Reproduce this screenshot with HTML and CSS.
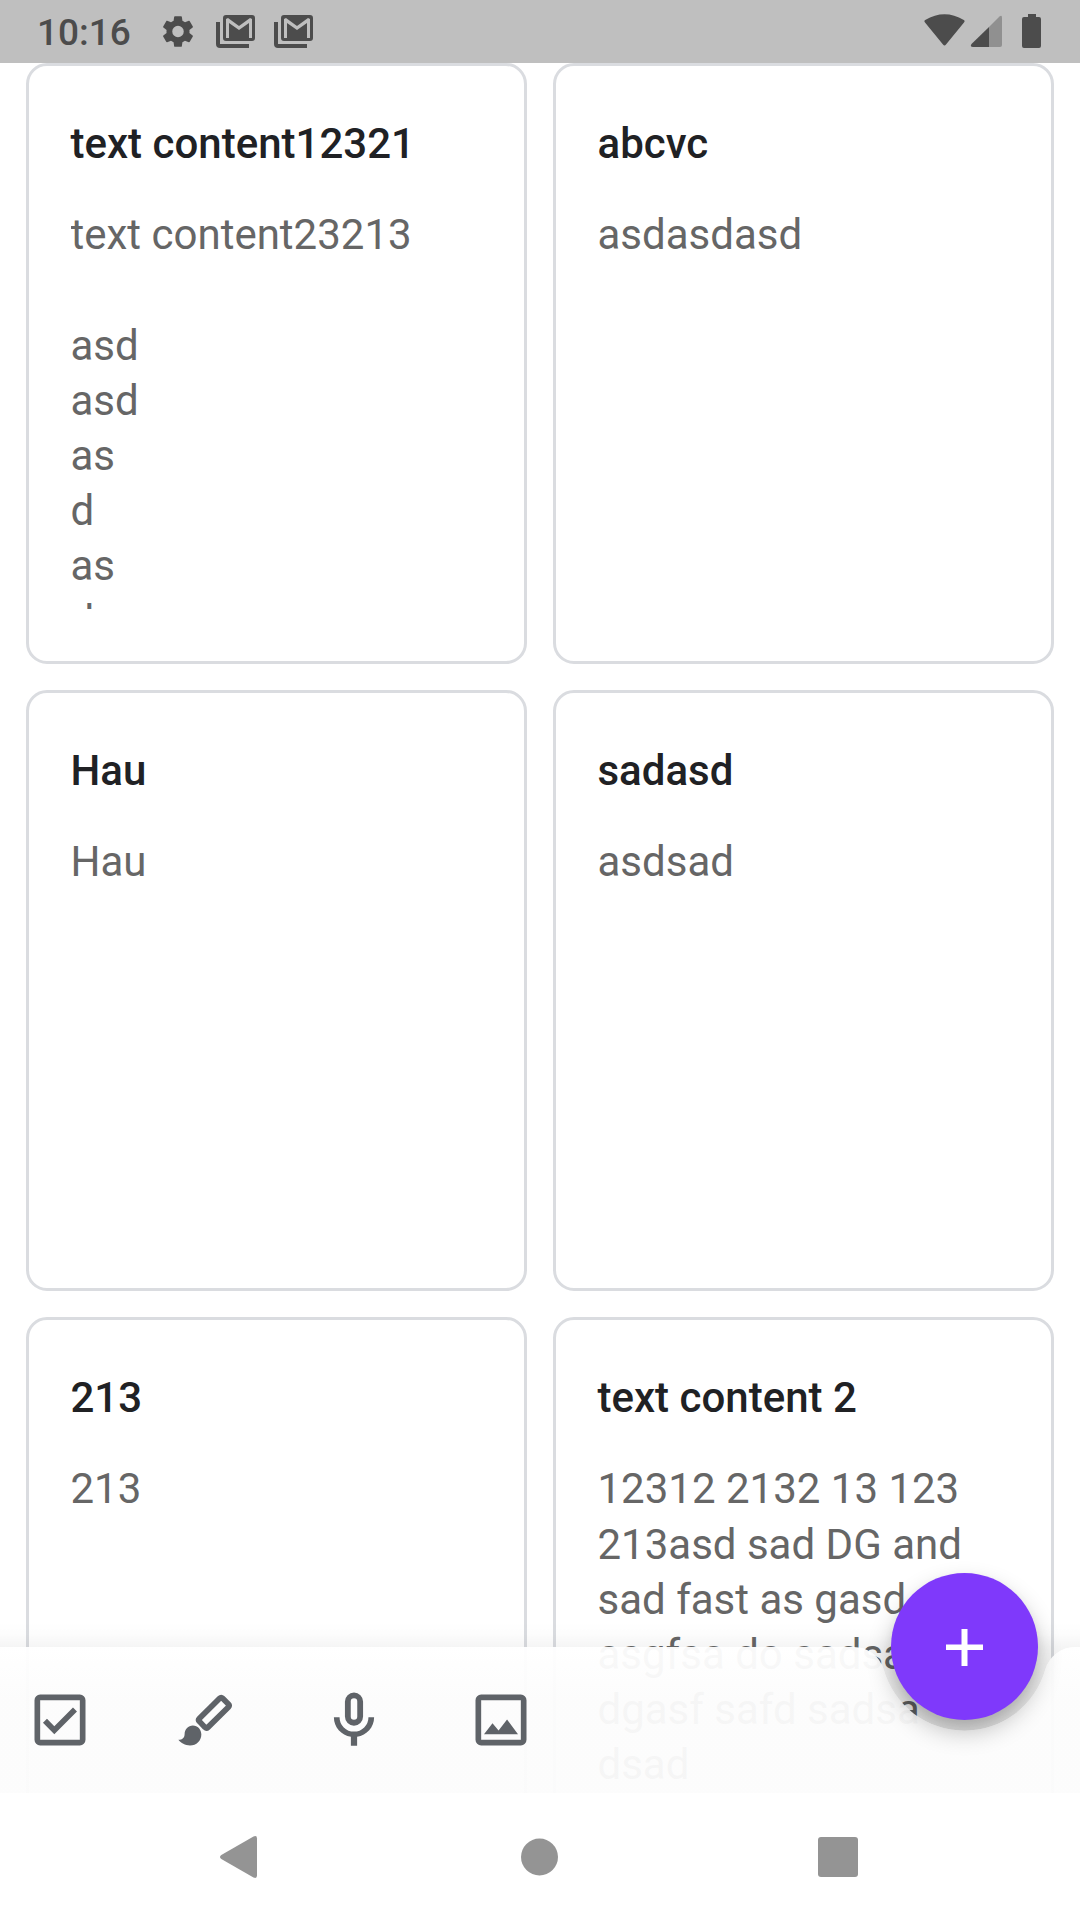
FILE: index.html
```html
<!DOCTYPE html>
<html lang="en">
<head>
<meta charset="utf-8">
<title>Notes</title>
<link rel="stylesheet" href="styles.css">
</head>
<body>
<div class="screen">
  <header class="status">
    <span class="clock">10:16</span>
    <svg class="gear" viewBox="2 2 20 20"><path fill-rule="evenodd" d="M19.14 12.94c.04-.3.06-.61.06-.94 0-.32-.02-.64-.07-.94l2.03-1.58a.49.49 0 0 0 .12-.61l-1.92-3.32a.488.488 0 0 0-.59-.22l-2.39.96c-.5-.38-1.03-.7-1.62-.94l-.36-2.54a.484.484 0 0 0-.48-.41h-3.84c-.24 0-.43.17-.47.41l-.36 2.54c-.59.24-1.13.57-1.62.94l-2.39-.96c-.22-.08-.47 0-.59.22L2.74 8.87c-.12.21-.08.47.12.61l2.03 1.58c-.05.3-.09.63-.09.94s.02.64.07.94l-2.03 1.58a.49.49 0 0 0-.12.61l1.92 3.32c.12.22.37.29.59.22l2.39-.96c.5.38 1.03.7 1.62.94l.36 2.54c.05.24.24.41.48.41h3.84c.24 0 .44-.17.47-.41l.36-2.54c.59-.24 1.13-.56 1.62-.94l2.39.96c.22.08.47 0 .59-.22l1.92-3.32c.12-.22.07-.47-.12-.61l-2.01-1.58zM12 15.6a3.6 3.6 0 1 1 0-7.2 3.6 3.6 0 0 1 0 7.2z"/></svg>
    <svg class="mail" viewBox="0 0 39 33"><path d="M0 7h4v22h29v4H4a4 4 0 0 1-4-4z"/><path fill-rule="evenodd" d="M10 0h26a3 3 0 0 1 3 3v20a3 3 0 0 1-3 3H10a3 3 0 0 1-3-3V3a3 3 0 0 1 3-3zM10 4v19h3V8l10 7 10-7v15h3V4l-2-1-11 8-11-8z"/></svg>
    <svg class="mail" viewBox="0 0 39 33"><path d="M0 7h4v22h29v4H4a4 4 0 0 1-4-4z"/><path fill-rule="evenodd" d="M10 0h26a3 3 0 0 1 3 3v20a3 3 0 0 1-3 3H10a3 3 0 0 1-3-3V3a3 3 0 0 1 3-3zM10 4v19h3V8l10 7 10-7v15h3V4l-2-1-11 8-11-8z"/></svg>
    <svg class="signals" viewBox="0 0 118 34"><path d="M1 8.500Q-.3 7 1.200 6Q20.500-5.500 39.800 6Q41.300 7 40 8.500L22 30.500Q20.500 32.500 19 30.500z"/><path opacity=".4" d="M65 13L75.500 2.500Q78 .6 78 3.500V31q0 2-2 2H65z"/><path d="M65 13V33H49q-3.500-.5-1.500-3z"/><path d="M104 0h8v3h3q2 0 2 2v27q0 2-2 2H100q-2 0-2-2V5q0-2 2-2h4z"/></svg>
  </header>
  <main class="notes">
    <article class="card"><h2>text content12321</h2><p class="body">text content23213

asd
asd
as
d
as
d</p></article>
    <article class="card"><h2>abcvc</h2><p class="body">asdasdasd</p></article>
    <article class="card"><h2>Hau</h2><p class="body">Hau</p></article>
    <article class="card"><h2>sadasd</h2><p class="body">asdsad</p></article>
    <article class="card"><h2>213</h2><p class="body">213</p></article>
    <article class="card"><h2>text content 2</h2><p class="body">12312 2132 13 123
213asd sad DG and
sad fast as gasd
asgfsa do sadsa
dgasf safd sadsa
dsad</p></article>
  </main>
  <div class="appbar">
    <svg class="surface" viewBox="0 0 1080 246">
      <defs>
        <linearGradient id="fill" x1="0" y1="100" x2="0" y2="246" gradientUnits="userSpaceOnUse"><stop offset="0" stop-color="#fff"/><stop offset=".35" stop-color="#fcfcfc"/><stop offset="1" stop-color="#fcfcfc"/></linearGradient>
        <linearGradient id="edge" x1="0" y1="74" x2="0" y2="100" gradientUnits="userSpaceOnUse"><stop offset="0" stop-color="#000" stop-opacity="0"/><stop offset=".5" stop-color="#000" stop-opacity=".01"/><stop offset="1" stop-color="#000" stop-opacity=".04"/></linearGradient>
        <linearGradient id="well" x1="0" y1="100" x2="0" y2="184" gradientUnits="userSpaceOnUse"><stop offset="0" stop-color="#000" stop-opacity=".04"/><stop offset="1" stop-color="#000" stop-opacity=".11"/></linearGradient>
      </defs>
      <path fill="url(#edge)" d="M0 74H1080V100H0z"/>
      <path fill="url(#well)" d="M853.500 100A31.500 31.500 0 0 1 883.700 122.600A84 84 0 0 0 1045.300 122.600A31.500 31.500 0 0 1 1075.500 100z"/>
      <path fill="url(#fill)" fill-opacity=".955" d="M0 100H853.500A31.500 31.500 0 0 1 883.700 122.600A84 84 0 0 0 1045.300 122.600A31.500 31.500 0 0 1 1075.500 100H1080V246H0z"/>
    </svg>
    <div class="tools">
      <svg viewBox="0 0 24 24"><path d="M19 3H5a2 2 0 0 0-2 2v14a2 2 0 0 0 2 2h14a2 2 0 0 0 2-2V5a2 2 0 0 0-2-2zm0 16H5V5h14v14zM17.990 9l-1.410-1.420-6.590 6.590-2.580-2.570-1.420 1.410 4 3.990z"/></svg>
      <svg viewBox="0 0 24 24"><path class="handle" d="M16.500 4.300q.5-.5 1 0l2.100 2.100q.5.500 0 1l-7.300 7.200q-.5.500-1 0l-2-2.100q-.5-.5 0-1z"/><path d="M7 13.900c1.700 0 3 1.400 3 3.200 0 2.200-1.700 3.900-4 3.900-1.700 0-3.200-.8-4.100-2 1.400-.1 2.200-.8 2.200-2.100 0-1.700 1.300-3 2.900-3z"/></svg>
      <svg viewBox="0 0 24 24"><path fill-rule="evenodd" d="M12 14a3.200 3.200 0 0 0 3.200-3.200V5.500a3.200 3.200 0 0 0-6.400 0v5.300A3.200 3.200 0 0 0 12 14zM10.850 5.500a1.150 1.150 0 0 1 2.300 0v5.300a1.150 1.150 0 0 1-2.300 0zM17.100 11a5.100 5.100 0 0 1-10.200 0H4.900c0 3.500 2.600 6.400 6 6.900v3.200h2.200v-3.200c3.400-.5 6-3.400 6-6.900z"/></svg>
      <svg viewBox="0 0 24 24"><path d="M19 5v14H5V5h14m0-2H5a2 2 0 0 0-2 2v14a2 2 0 0 0 2 2h14a2 2 0 0 0 2-2V5a2 2 0 0 0-2-2z"/><path d="M14.140 11.860l-3 3.870L9 13.140 6 17h12z"/></svg>
    </div>
    <button class="fab" aria-label="Add"><svg viewBox="0 0 37 37"><path d="M15.500 0h6v15.500H37v5.500H21.500V37h-6V21H0v-5.500h15.500z"/></svg></button>
  </div>
  <nav class="navbar">
    <svg viewBox="0 0 44 44"><path d="M1.300 20L33.500 1.500Q37 0 37 3.500v37q0 3.500-3.500 2L1.300 24q-2.600-2 0-4z"/></svg>
    <svg viewBox="0 0 44 44"><circle cx="21.500" cy="22" r="18.500"/></svg>
    <svg viewBox="0 0 44 44"><rect x="2" y="2" width="40" height="40" rx="3"/></svg>
  </nav>
</div>
</body>
</html>
```
FILE: styles.css
```css
* { box-sizing: border-box; }
body { margin: 0; background: #fff; font-family: Roboto, sans-serif; }
.screen { position: relative; display: flex; flex-direction: column; width: 1080px; height: 1920px; overflow: hidden; }
.status { flex: none; height: 63px; display: flex; align-items: flex-start; padding: 0 38px 0 37px; background: #bfbfbf; fill: #4c4c4c; }
.clock { width: 125px; font-size: 37px; font-weight: 500; line-height: 44px; padding-top: 11px; color: #4c4c4c; }
.gear { width: 32px; height: 33px; margin: 15px 22px 0 0; }
.mail { width: 39px; height: 33px; margin: 15px 19px 0 0; }
.signals { width: 118px; height: 34px; margin: 14px 0 0 auto; }
.notes { height: 1730px; flex: none; overflow: hidden; display: grid; grid-template-columns: 501px 501px; grid-auto-rows: 601px; gap: 26px; padding: 0 26px; }
.card { border: 3px solid #dadce0; border-radius: 21px; padding: 50px 40px 52px 41.5px; display: flex; flex-direction: column; overflow: hidden; }
h2 { margin: 0 0 34px; font-size: 42px; line-height: 56px; font-weight: 500; color: #202124; }
.body { flex: 1; min-height: 0; overflow: hidden; margin: 0; font-size: 42px; line-height: 55px; color: #666; white-space: pre; }
.body::first-line { line-height: 57px; }
.appbar { position: absolute; left: 0; top: 1547px; width: 1080px; height: 246px; }
.surface { position: absolute; inset: 0; width: 1080px; height: 246px; }
.tools { position: relative; display: flex; gap: 79px; padding: 139px 0 0 26px; fill: #5f6368; }
.tools svg { width: 68px; height: 68px; }
.handle { fill: none; stroke: #5f6368; stroke-width: 2; stroke-linejoin: round; }
.fab { position: absolute; left: 891px; top: 26px; width: 147px; height: 147px; padding: 0; border: 0; border-radius: 50%; background: #7f39fb; display: flex; align-items: center; justify-content: center; box-shadow: 0 12px 24px rgba(0, 0, 0, .24), 0 4px 10px rgba(0, 0, 0, .06); }
.fab svg { width: 37px; height: 37px; fill: #fff; position: relative; top: 1px; }
.navbar { flex: none; height: 127px; display: flex; justify-content: center; align-items: center; gap: 254px; fill: #949494; }
.navbar svg { width: 44px; height: 44px; }
```
